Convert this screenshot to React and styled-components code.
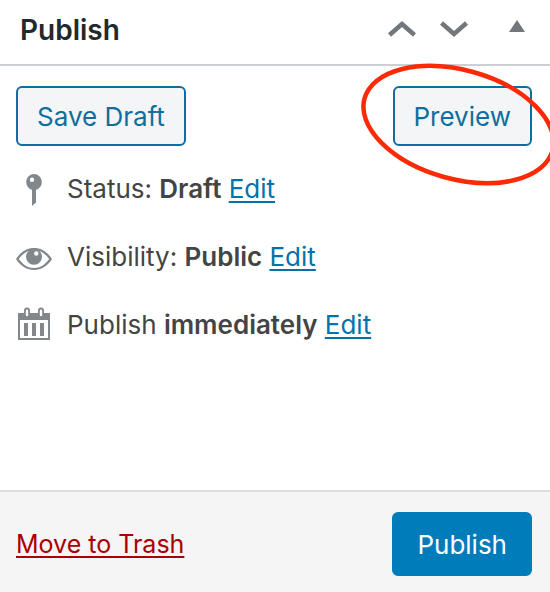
import React from "react";
import styled, { createGlobalStyle } from "styled-components";

const GlobalStyle = createGlobalStyle`
  *, *::before, *::after { box-sizing: border-box; }
  body { margin: 0; background: #fff; }
`;

const Panel = styled.section`
  display: flex;
  flex-direction: column;
  min-height: 100vh;
  overflow: hidden;
  background: #fff;
  color: #444;
  font-family: Inter, "Liberation Sans", sans-serif;
  font-size: 26px;
  line-height: 32px;
`;

const Header = styled.header`
  display: flex;
  align-items: center;
  justify-content: space-between;
  padding: 14px 25px 18px 20px;
  border-bottom: 2px solid #ccd0d4;
`;

const Title = styled.h2`
  margin: 0;
  color: #23282d;
  font-size: 28px;
  font-weight: 600;
  line-height: 32px;
`;

const HeaderActions = styled.div`
  display: flex;
  align-items: center;
  gap: 16px;
`;

const IconButton = styled.button`
  display: flex;
  justify-content: center;
  width: 36px;
  padding: 0;
  border: 0;
  background: none;
  color: #72777c;
  cursor: pointer;

  &:last-child { width: 16px; margin-left: 21px; }
`;

const Body = styled.div`
  flex: 1;
  padding: 20px 18px 16px 16px;
`;

const Actions = styled.div`
  display: flex;
  justify-content: space-between;
  margin-bottom: 9px;
`;

const Button = styled.button`
  height: ${(p) => (p.$primary ? "64px" : "60px")};
  padding: 2px ${(p) => (p.$primary ? "23px" : "19px")} 0;
  border: 2px solid ${(p) => (p.$primary ? "#007cba" : "#0f6e9f")};
  border-radius: 6px;
  background: ${(p) => (p.$primary ? "#007cba" : "#f3f5f6")};
  color: ${(p) => (p.$primary ? "#fff" : "#0f6e9f")};
  font: inherit;
  cursor: pointer;
`;

const Highlighted = styled.div`
  position: relative;
`;

const Ring = styled.svg`
  position: absolute;
  top: -25px;
  left: -35px;
  pointer-events: none;
`;

const Settings = styled.ul`
  margin: 0;
  padding: 0;
  list-style: none;
`;

const Setting = styled.li`
  display: flex;
  align-items: center;
  gap: 15px;
  height: 68px;
`;

const Strong = styled.strong`
  font-weight: 600;
`;

const Link = styled.a`
  color: ${(p) => (p.$danger ? "#a00" : "#0073aa")};
  font-size: ${(p) => (p.$danger ? "25px" : "inherit")};
  text-decoration: underline;
  text-decoration-thickness: 2px;
  text-underline-offset: 3px;
  text-decoration-skip-ink: none;
`;

const Footer = styled.footer`
  display: flex;
  align-items: center;
  justify-content: space-between;
  padding: 20px 18px 16px 16px;
  border-top: 2px solid #ddd;
  background: #f5f5f5;
`;

const Chevron = ({ down }) => (
  <svg width="28" height="18" viewBox="0 0 28 18" aria-hidden="true">
    <path
      d={down ? "M1.5 2 14 13 26.5 2" : "M1.5 14 14 3 26.5 14"}
      fill="none"
      stroke="currentColor"
      strokeWidth="4.500"
    />
  </svg>
);

const Triangle = () => (
  <svg width="16" height="20" viewBox="0 0 16 20" aria-hidden="true">
    <path d="M8 0 16 12H0Z" fill="currentColor" />
  </svg>
);

const PinIcon = () => (
  <svg width="36" height="36" viewBox="0 0 36 36" fill="#82878c" aria-hidden="true">
    <path
      fillRule="evenodd"
      d="M18 3a8 8 0 0 1 2 15.700V31.500L16 35V18.700A8 8 0 0 1 18 3Zm-2 3.500a2.200 2.200 0 1 0 0 4.400 2.200 2.200 0 0 0 0-4.400Z"
    />
  </svg>
);

const EyeIcon = () => (
  <svg width="36" height="36" viewBox="0 -1 36 36" fill="#82878c" aria-hidden="true">
    <path
      fillRule="evenodd"
      d="M0 19C5 11.500 11 8 18 8s13 3.500 18 11c-5 7.500-11 11-18 11S5 26.500 0 19Zm2.800 0C7 24.800 12 28 18 28s11-3.200 15.200-9C29 13.200 24 10 18 10S7 13.200 2.800 19Z"
    />
    <path
      fillRule="evenodd"
      d="M13 10.500q5-3 10 0a8 8 0 1 1-10 0Zm7.300.8a2.200 2.200 0 1 0 0 4.400 2.200 2.200 0 0 0 0-4.400Z"
    />
  </svg>
);

const CalendarIcon = () => (
  <svg width="36" height="36" viewBox="0 1 36 36" fill="#82878c" aria-hidden="true">
    <path fillRule="evenodd" d="M2 7h32v27H2ZM4 14v18h28V14Z" />
    <path d="M8 17h4v13H8ZM16 17h4v13h-4ZM24 17h4v13h-4Z" />
    <path
      d="M8 9V4.500a3 3 0 0 1 6 0V9a3 3 0 0 1-6 0ZM22 9V4.500a3 3 0 0 1 6 0V9a3 3 0 0 1-6 0Z"
    />
    <path d="M9.800 9V4.800a1.200 1.200 0 0 1 2.400 0V9a1.200 1.200 0 0 1-2.400 0ZM23.800 9V4.800a1.200 1.200 0 0 1 2.400 0V9a1.200 1.200 0 0 1-2.400 0Z" fill="#fff" />
  </svg>
);

const settings = [
  { label: "Status:", value: "Draft", Icon: PinIcon },
  { label: "Visibility:", value: "Public", Icon: EyeIcon },
  { label: "Publish", value: "immediately", Icon: CalendarIcon },
];

export default function App() {
  return (
    <>
      <GlobalStyle />
      <Panel>
        <Header>
          <Title>Publish</Title>
          <HeaderActions>
            <IconButton type="button" aria-label="Move up"><Chevron /></IconButton>
            <IconButton type="button" aria-label="Move down"><Chevron down /></IconButton>
            <IconButton type="button" aria-label="Toggle panel"><Triangle /></IconButton>
          </HeaderActions>
        </Header>
        <Body>
          <Actions>
            <Button type="button">Save Draft</Button>
            <Highlighted>
              <Button type="button">Preview</Button>
              <Ring width="204" height="128" viewBox="0 0 204 128" aria-hidden="true">
                <ellipse
                  cx="100.500"
                  cy="63.500"
                  rx="97.500"
                  ry="54.500"
                  transform="rotate(15.500 100.500 63.500)"
                  fill="none"
                  stroke="#fa2a05"
                  strokeWidth="4.500"
                />
              </Ring>
            </Highlighted>
          </Actions>
          <Settings>
            {settings.map(({ label, value, Icon }) => (
              <Setting key={label}>
                <Icon />
                <span>
                  {label} <Strong>{value}</Strong>{" "}
                  <Link href="#edit" aria-label={`Edit ${label}`}>Edit</Link>
                </span>
              </Setting>
            ))}
          </Settings>
        </Body>
        <Footer>
          <Link href="#trash" $danger>Move to Trash</Link>
          <Button type="button" $primary>Publish</Button>
        </Footer>
      </Panel>
    </>
  );
}
